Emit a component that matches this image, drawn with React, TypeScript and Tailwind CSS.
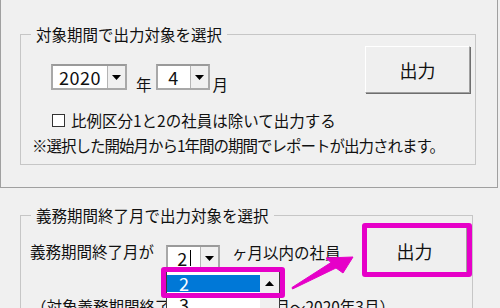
import React from "react";

const DownTri = () => (
  <svg width="9" height="5" viewBox="0 0 9 5">
    <path d="M0 0 H9 L4.5 5 Z" fill="#000" />
  </svg>
);

const UpTri = () => (
  <svg width="9" height="5" viewBox="0 0 9 5">
    <path d="M0 5 H9 L4.5 0 Z" fill="#000" />
  </svg>
);

const Combo = ({ value, w, caret }: { value: string; w: string; caret?: boolean }) => (
  <div className={`${w} h-[26px] border-2 border-[#a8a8a8] border-t-[#9a9a9a] bg-white flex`}>
    <div className="flex-1 flex items-center justify-center text-[18px] leading-none tracking-[0.5px]">
      <span>{value}</span>
      {caret && <span className="ml-[2px] w-px h-[16px] bg-black" />}
    </div>
    <div className="w-[18px] h-full bg-[#f0f0f0] border-l border-[#b4b4b4] flex items-center justify-center">
      <DownTri />
    </div>
  </div>
);

const OutButton = () => (
  <button className="ml-auto mr-[5px] w-[105px] h-[47px] bg-[#efefef] border border-t-white border-l-white border-r-[#a0a0a0] border-b-[#a0a0a0] shadow-[1px_1px_0_#6e6e6e] text-[18px] leading-none text-[#111]">
    出力
  </button>
);

const App = () => {
  return (
    <div className="relative w-[500px] h-[308px] overflow-hidden bg-[#f0f0f0] text-[15.5px] text-[#111] font-['Noto_Sans_CJK_JP','Noto_Sans',sans-serif]">
      {/* top panel */}
      <div className="h-[188px] w-[498px] border-l border-r border-b border-[#a0a0a0] pt-[24px] pl-[19px]">
        <fieldset className="w-[456px] h-[141px] border border-[#c6c6c6]">
          <legend className="ml-[10px] px-[5px] leading-[20px]">対象期間で出力対象を選択</legend>
          <div className="flex items-start mt-[2px]">
            <div className="ml-[30px] mt-[18px] flex items-start">
              <Combo value="2020" w="w-[76px]" />
              <span className="ml-[9px] mr-[4px] mt-[10px] leading-[20px]">年</span>
              <Combo value="4" w="w-[54px]" />
              <span className="ml-[3px] mt-[10px] leading-[20px]">月</span>
            </div>
            <OutButton />
          </div>
          <div className="flex items-center mt-[16px] h-[20px]">
            <div className="ml-[31px] w-[13px] h-[13px] border border-[#333] bg-white" />
            <span className="ml-[6px] leading-[20px]">比例区分1と2の社員は除いて出力する</span>
          </div>
          <div className="mt-[5px] ml-[11px] leading-[20px] tracking-[-1px]">
            ※選択した開始月から1年間の期間でレポートが出力されます。
          </div>
        </fieldset>
      </div>

      {/* bottom panel */}
      <div className="pt-[17px] pl-[20px]">
        <fieldset className="w-[453px] h-[150px] border border-[#c6c6c6]">
          <legend className="ml-[10px] px-[5px] leading-[20px]">義務期間終了月で出力対象を選択</legend>
          <div className="flex items-start mt-[2px]">
            <span className="ml-[9px] mt-[14px] leading-[20px]">義務期間終了月が</span>
            <div className="ml-[12px] mt-[18px]">
              <Combo value="2" w="w-[54px]" caret />
            </div>
            <span className="ml-[12px] mt-[15px] leading-[20px]">ヶ月以内の社員</span>
            <OutButton />
          </div>
          <div className="mt-[22px] ml-[10px] leading-[20px] whitespace-nowrap">
            （対象義務期間終<span className="tracking-[1.6px]">了月：2020年1</span>月～2020年3月）
          </div>
        </fieldset>
      </div>

      {/* open dropdown list */}
      <div className="absolute left-[166px] top-[271px] w-[114px] h-[45px] bg-white border border-[#3c3c3c] flex">
        <div className="flex-1 pt-[3px]">
          <div className="h-[17px] bg-[#0078d7] text-white text-[18px] leading-[17px] pl-[12px]">2</div>
          <div className="h-[17px] text-[18px] leading-[17px] pl-[12px] mt-[4px]">3</div>
        </div>
        <div className="w-[19px] bg-[#f0f0f0] pt-[3px]">
          <div className="h-[17px] flex items-center justify-center">
            <UpTri />
          </div>
        </div>
      </div>

      {/* annotations */}
      <div className="absolute left-[161px] top-[267px] w-[124px] h-[31px] border-[5px] border-[#e600c8] rounded-[3px] pointer-events-none" />
      <div className="absolute left-[362px] top-[223px] w-[110px] h-[54px] border-[5px] border-[#e600c8] rounded-[3px] pointer-events-none" />
      <svg className="absolute left-0 top-0 pointer-events-none" width="500" height="308" viewBox="0 0 500 308">
        <polygon
          points="292,287.5 331,262.5 326,258 353,257 343,273 336,268 292.5,289"
          fill="#e600c8"
          stroke="#e600c8"
          strokeWidth="1"
          strokeLinejoin="round"
        />
      </svg>
    </div>
  );
};

export default App;
